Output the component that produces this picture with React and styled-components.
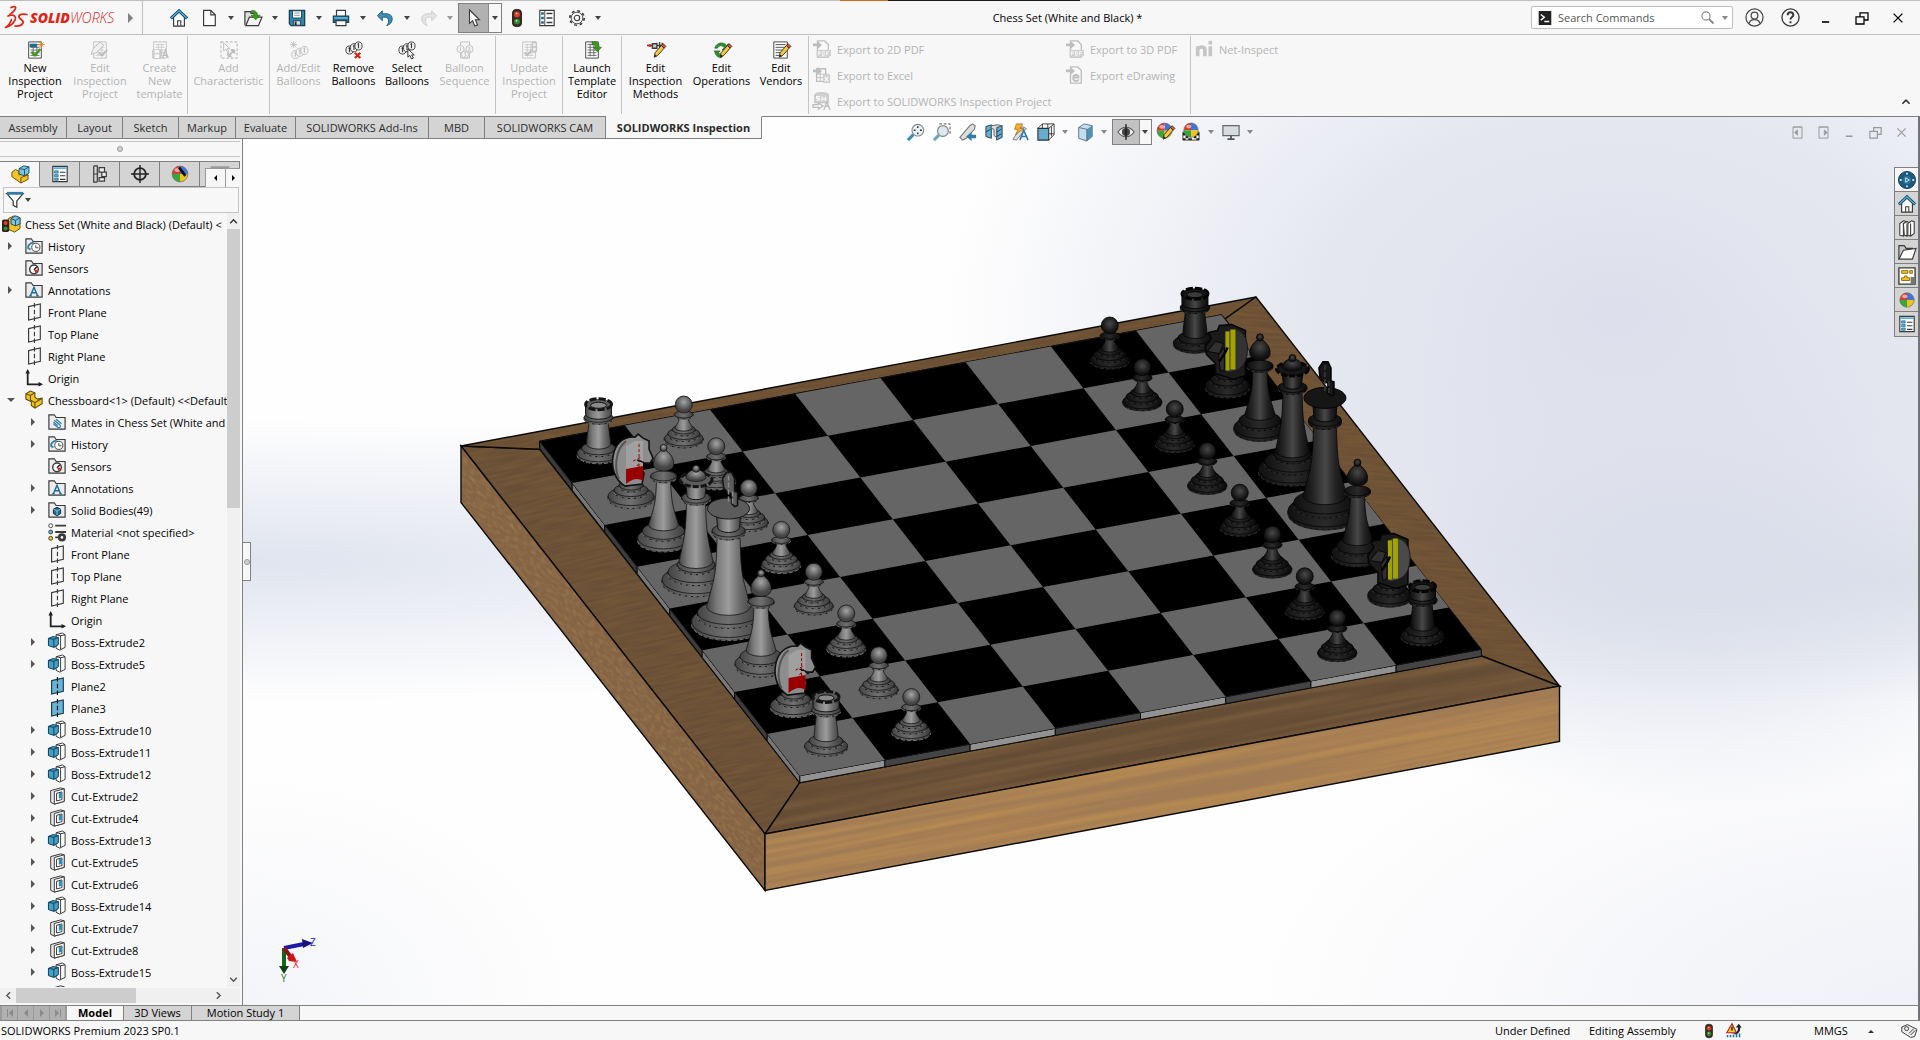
import styled, { createGlobalStyle } from 'styled-components';

const GlobalStyle = createGlobalStyle`
    * {
        box-sizing: border-box;
    }

    body {
        margin: 0;
        background: #f7f7f7;
        color: #000;
        font-family: "Open Sans", "Noto Sans", sans-serif;
        font-size: 11px;
        line-height: 13px;
    }

    button, input {
        font: inherit;
        color: inherit;
        padding: 0;
        border: 0;
        background: none;
    }
`;

const Window = styled.div`
    display: flex;
    flex-direction: column;
    height: 100vh;
    overflow: hidden;
`;

const TitleBar = styled.header`
    display: flex;
    align-items: center;
    flex: none;
    height: 35px;
    padding: 1px 4px 0 0;
    border-bottom: 1px solid #bdbdbd;
    background: linear-gradient(
        90deg,
        #bdbdbd 43.75%,
        #d2691e 43.75% 46.25%,
        #1a1a1a 46.25% 56.25%,
        #bdbdbd 56.25%
    ) top / 100% 1px no-repeat;
`;

const Brand = styled.div`
    display: flex;
    align-items: center;
    align-self: stretch;
    width: 143px;
    padding-left: 4px;
    border-right: 1px solid #bdbdbd;
    color: #da291c;
    font-size: 14px;
    font-style: italic;

    strong {
        font-weight: 800;
    }
`;

const BrandName = styled.span`
    flex: 1;
    padding-left: 1px;
    font-weight: 300;
`;

const QuickBar = styled.div`
    display: flex;
    align-items: center;
    padding-left: 24px;
`;

const QuickItem = styled.div`
    display: flex;
    align-items: center;
`;

const IconButton = styled.button`
    display: flex;
    align-items: center;
    justify-content: center;
    flex: none;
    width: ${({ $w }) => $w || 24}px;
    height: ${({ $h }) => $h || 24}px;
    margin-right: ${({ $gap }) => $gap || 0}px;
    opacity: ${({ disabled }) => (disabled ? 0.6 : 1)};
`;

const SplitBox = styled.div`
    display: flex;
    border: 1px solid #808080;
    background: #f7f7f7;
    margin-left: ${({ $gap }) => $gap || 0}px;

    ${IconButton}:first-child {
        background: ${({ $fill }) => $fill || '#b1b1b1'};
        border-right: 1px solid #8a8a8a;
    }
`;

const DocTitle = styled.h1`
    flex: 1;
    margin: 0;
    text-align: center;
    font-size: 11px;
    font-weight: 400;
`;

const SearchBox = styled.label`
    display: flex;
    align-items: center;
    width: 202px;
    height: 23px;
    margin-right: 3px;
    padding: 0 3px 0 6px;
    gap: 6px;
    background: #fff;
    border: 1px solid #bdbdbd;
    border-radius: 2px;

    input {
        flex: 1;
        min-width: 0;
        outline: none;
        color: #555;
    }

    input::placeholder {
        color: #555;
        opacity: 1;
    }
`;

const Ribbon = styled.section`
    display: flex;
    flex: none;
    height: 81px;
    padding: 1px 0 2px 2px;
`;

const RibbonGroup = styled.div`
    display: flex;
    align-items: flex-start;
    padding-top: 5px;
    border-right: 1px solid #c4c4c4;
`;

const RibbonButton = styled.button`
    display: flex;
    flex-direction: column;
    align-items: center;
    width: ${({ $w }) => $w}px;
    color: ${({ disabled }) => (disabled ? '#b4b4b4' : '#000')};
    white-space: pre-line;

    svg {
        margin-bottom: 2px;
        filter: ${({ disabled }) => (disabled ? 'grayscale(1)' : 'none')};
        opacity: ${({ disabled }) => (disabled ? 0.3 : 1)};
    }
`;

const ExportGrid = styled.div`
    display: grid;
    grid-template-columns: 253px 128px;
    grid-auto-rows: 26px;
    align-content: start;
    border-right: 1px solid ${({ $last }) => ($last ? 'transparent' : '#c4c4c4')};
`;

const ExportButton = styled.button`
    display: flex;
    align-items: center;
    gap: 6px;
    padding-left: 4px;
    color: #b4b4b4;
    white-space: nowrap;

    svg {
        flex: none;
        opacity: 0.3;
        filter: grayscale(1);
    }
`;

const CollapseRibbon = styled(IconButton)`
    margin-left: auto;
    align-self: flex-end;
    margin-right: 2px;
`;

// the command tabs hang over the top edge of both the panel and the viewport
const TabBar = styled.nav`
    position: absolute;
    z-index: 2;
    display: flex;
    height: 23px;
    border-bottom: 1px solid #7f7f7f;
`;

const CommandTab = styled.button`
    width: ${({ $w }) => $w}px;
    border-right: 1px solid #7f7f7f;
    border-top: 1px solid ${({ $active }) => ($active ? '#f7f7f7' : '#7f7f7f')};
    background: ${({ $active }) => ($active ? '#f7f7f7' : '#d4d4d4')};
    color: #2b2b2b;
    font-weight: ${({ $active }) => ($active ? 700 : 400)};
    white-space: nowrap;
`;

const Body = styled.div`
    display: flex;
    flex: 1;
    min-height: 0;
    border-right: 2px solid #707478;
`;

const SidePanel = styled.aside`
    display: flex;
    flex-direction: column;
    width: 243px;
    flex: none;
    padding: 25px 2px 2px 0;
    border-right: 1px solid #808080;
`;

const Grip = styled.div`
    display: flex;
    align-items: center;
    justify-content: center;
    flex: none;
    height: 16px;
    margin-bottom: 4px;
    border-top: 1px solid #c4c4c4;
    border-bottom: 1px solid #c4c4c4;
`;

const GripDot = styled.span`
    width: 6px;
    height: 6px;
    border-radius: 50%;
    border: 1px solid #9a9a9a;
    background: #d0d0d0;
`;

const PanelTabs = styled.div`
    display: flex;
    flex: none;
    height: 26px;
    border-top: 1px solid #808080;
    background: #d4d4d4;
    overflow: hidden;
    position: relative;
`;

const PanelTab = styled.button`
    display: flex;
    align-items: center;
    justify-content: center;
    flex: none;
    width: 40px;
    background: ${({ $active }) => ($active ? '#f7f7f7' : '#d4d4d4')};
    border-right: 1px solid #808080;
    border-bottom: 1px solid ${({ $active }) => ($active ? '#f7f7f7' : '#808080')};
`;

const TabScroller = styled.div`
    position: absolute;
    right: 0;
    bottom: 0;
    display: flex;
    background: #f7f7f7;
    border-top: 1px solid #9a9a9a;
    border-left: 1px solid #9a9a9a;

    button + button {
        border-left: 1px solid #9a9a9a;
    }
`;

const FilterBox = styled.div`
    display: flex;
    align-items: center;
    flex: none;
    height: 26px;
    margin: 0 1px 0 3px;
    padding-left: 2px;
    border: 1px solid #c4c4c4;

    input {
        flex: 1;
        min-width: 0;
        outline: none;
    }
`;

const TreeArea = styled.div`
    display: flex;
    flex: 1;
    min-height: 0;
`;

const Tree = styled.ul`
    flex: 1;
    min-width: 0;
    margin: 0;
    padding: 0;
    list-style: none;
    overflow: hidden;
`;

const TreeRow = styled.li`
    display: flex;
    align-items: center;
    height: 22px;
    gap: 5px;
    padding-left: ${({ $depth }) => ($depth < 0 ? 2 : $depth * 23 + 7)}px;
    white-space: nowrap;

    svg {
        flex: none;
    }
`;

const Twisty = styled.span`
    display: flex;
    justify-content: center;
    width: 8px;
    margin-right: 5px;
    flex: none;
`;

const VScroll = styled.div`
    display: flex;
    flex-direction: column;
    align-items: center;
    width: 13px;
    background: #f0f0f0;
`;

const VThumb = styled.div`
    width: 13px;
    height: 36%;
    background: #cdcdcd;
    margin-bottom: auto;
`;

const HScroll = styled.div`
    display: flex;
    align-items: center;
    flex: none;
    height: 15px;
    margin-top: 1px;
    padding-right: 14px;
    background: #f0f0f0;
`;

const HThumb = styled.div`
    width: 120px;
    height: 15px;
    background: #cdcdcd;
    margin-right: auto;
`;

const Viewport = styled.main`
    position: relative;
    flex: 1;
    min-width: 0;
    border-top: 1px solid #7f7f7f;
    background:
        radial-gradient(ellipse 40% 50% at 82% 22%, rgba(221, 224, 236, 1), rgba(221, 224, 236, 0.75) 45%, rgba(221, 224, 236, 0) 100%),
        radial-gradient(ellipse 26% 30% at 86% 48%, rgba(212, 217, 230, 0.9), rgba(212, 217, 230, 0) 100%),
        radial-gradient(ellipse 60% 16% at 0% 50%, rgba(224, 228, 239, 1), rgba(224, 228, 239, 0) 100%),
        radial-gradient(ellipse 50% 14% at 100% 52%, rgba(222, 226, 237, 0.9), rgba(222, 226, 237, 0) 100%),
        radial-gradient(ellipse 40% 36% at 100% 100%, rgba(240, 241, 247, 1), rgba(240, 241, 247, 0) 100%),
        radial-gradient(ellipse 20% 26% at 0% 100%, rgba(244, 245, 249, 1), rgba(244, 245, 249, 0) 100%),
        #fefefe;
`;

const Scene = styled.svg`
    display: block;
    width: 100%;
    height: 100%;
`;

const HeadsUp = styled.div`
    position: absolute;
    top: 2px;
    left: 0;
    right: 0;
    display: flex;
    align-items: center;
    justify-content: center;
    padding-right: 3px;
`;

const DocControls = styled.div`
    position: absolute;
    top: 3px;
    right: 4px;
    display: flex;
`;

const DocButton = styled(IconButton)`
    color: #999;
`;

const TaskPane = styled.div`
    position: absolute;
    top: 50px;
    right: 0;
    display: flex;
    flex-direction: column;
    border: 1px solid #808080;
    border-right: 0;
`;

const TaskTab = styled(IconButton)`
    background: ${({ $active }) => ($active ? '#f7f7f7' : '#d4d4d4')};
    border-bottom: 1px solid #808080;

    &:last-child {
        border-bottom: 0;
    }
`;

const PanelHandle = styled.button`
    position: absolute;
    left: 0;
    top: 425px;
    width: 8px;
    height: 39px;
    display: flex;
    align-items: center;
    justify-content: center;
    background: #f7f7f7;
    border: 1px solid #808080;
    border-left: 0;
`;

const BottomBar = styled.div`
    display: flex;
    flex: none;
    height: 16px;
    border-top: 1px solid #808080;
    border-bottom: 1px solid #808080;
    border-right: 2px solid #707478;
    background: #f7f7f7;
`;

const NavButtons = styled.div`
    display: flex;
    width: 67px;
    padding-left: 2px;
    background: #9a9a9a;

    button {
        width: 15px;
        height: 14px;
        margin-right: 1px;
        background: #b0b0b0;
        display: flex;
        align-items: center;
        justify-content: center;
    }
`;

const SheetTab = styled.button`
    width: ${({ $w }) => $w}px;
    line-height: 12px;
    background: ${({ $active }) => ($active ? '#f7f7f7' : '#d4d4d4')};
    border-right: 1px solid #808080;
    font-weight: ${({ $active }) => ($active ? 700 : 400)};
`;

const StatusBar = styled.footer`
    display: flex;
    align-items: center;
    flex: none;
    height: 19px;
    padding: 0 2px 0 1px;
`;

const StatusText = styled.span`
    width: ${({ $w }) => ($w ? `${$w}px` : 'auto')};
    flex: ${({ $grow }) => ($grow ? 1 : 'none')};
`;

const INK = '#3a3a3a';
const BLUE = '#1f6d94';
const SKY = '#5fb2d6';

const pencil = (
    <g>
        <path d="M8 18l1-5 7-8 3 3-7 8z" fill="#f2c84b" stroke="#3a2a10" />
        <path d="M16 5l2-2 3 3-2 2z" fill="#d9534f" stroke="#3a2a10" />
        <path d="M8 18l1-3 2 2z" fill="#222" />
    </g>
);

const balloons = (
    <g fill="#eee" stroke={INK}>
        <ellipse cx="5" cy="10" rx="4" ry="4.5" />
        <ellipse cx="10" cy="7.5" rx="4" ry="4.5" />
        <ellipse cx="15" cy="5.5" rx="4" ry="4.5" />
        <path d="M4 8.5l1-1v5M9 6l1-1v5M14 4l1-1v5" fill="none" strokeWidth="1.2" />
    </g>
);

const sheet = (
    <g>
        <path d="M3 1h14v18H3z" fill="#fff" stroke={INK} />
        <path d="M5 4h10M5 7h10M5 10h10M5 13h10M5 16h10M8 3v14M12 3v14" stroke="#666" strokeWidth="1" />
    </g>
);

const folder = (
    <path d="M1 18V2h6l2 3h10v13z" fill="#ececec" stroke={INK} strokeWidth="1.3" />
);

const colorBall = (
    <g>
        <path d="M10 10V2a8 8 0 0 1 8 8z" fill="#3f74d8" />
        <path d="M10 10V2a8 8 0 0 0-8 8z" fill="#dd3a2d" />
        <path d="M10 10H2a8 8 0 0 0 8 8z" fill="#35a83a" />
        <path d="M10 10h8a8 8 0 0 1-8 8z" fill="#f2c21a" />
        <circle cx="10" cy="10" r="8" fill="none" stroke="#666" strokeWidth=".7" />
        <ellipse cx="7.5" cy="6" rx="3" ry="2" fill="#fff" opacity=".55" />
    </g>
);

const list = (
    <g>
        <path d="M2 1.5h16v17H2z" fill="#fff" stroke={INK} strokeWidth="1.3" />
        <path d="M2.5 2.5h15v2h-15z" fill={SKY} />
        <path d="M4 6.5h4V9H4zM4 10.5h4V13H4zM4 14.5h4V17H4z" fill={SKY} stroke={BLUE} strokeWidth=".8" />
        <path d="M10 8h6M10 12h6M10 16h6" stroke={INK} strokeWidth="1.2" />
    </g>
);

const glyphs = {
    home: (
        <g>
            <path d="M4 9v10h12V9l-6-6z" fill="#fff" stroke={INK} strokeWidth="1.3" />
            <path d="M8.5 19v-6H12v6" fill="none" stroke={INK} strokeWidth="1.2" />
            <path d="M1 10.5L10 2l9 8.5" fill="none" stroke="#144f70" strokeWidth="3.4" />
            <path d="M1.5 10L10 2l8.5 8" fill="none" stroke={SKY} strokeWidth="1.3" />
        </g>
    ),
    page: <path d="M4 1.5h8l5 5v12H4zM12 1.5v5h5" fill="#fbfbfb" stroke={INK} strokeWidth="1.3" />,
    open: (
        <g>
            <path d="M1 18V3h6l1 2h5v4" fill="#ddd" stroke={INK} strokeWidth="1.3" />
            <path d="M2 18.5L6 9h14l-4 9.5z" fill="#f4f4f4" stroke={INK} strokeWidth="1.3" />
            <path d="M8 2c4-1 7 1 7 5h3l-5 5-5-5h3c0-2-1-3-3-3z" fill="#3d9a1c" stroke="#23660c" strokeWidth=".7" />
        </g>
    ),
    save: (
        <g>
            <path d="M1.5 1.5h17v17h-15l-2-2z" fill="#3185ad" stroke="#163f55" strokeWidth="1.4" />
            <path d="M5 2h10v8H5z" fill="#fff" stroke="#163f55" />
            <path d="M7 4.5h6M7 7h6" stroke="#888" />
            <path d="M6 13h8v5H6z" fill="#ddd" stroke="#163f55" />
            <path d="M7.5 14h2v4h-2z" fill="#222" />
        </g>
    ),
    print: (
        <g>
            <path d="M5 8V1.5h10V8" fill="#fff" stroke={INK} strokeWidth="1.3" />
            <path d="M1.5 8h17v7h-17z" fill={BLUE} stroke="#163f55" strokeWidth="1.3" />
            <path d="M2.5 9h15v2h-15z" fill={SKY} />
            <path d="M4.5 13h11v5.5h-11z" fill="#fff" stroke={INK} strokeWidth="1.3" />
        </g>
    ),
    undo: <path d="M7 2L1.5 7.5 7 13V9.5c4-1 7 0 7 4 0 2-1 3.5-2 5 4-1.500 6-4 6-7.500C18 6 13 4.500 7 5.500z" fill="#3d8fb8" stroke="#1b5878" />,
    redo: <path d="M13 2l5.500 5.500L13 13V9.500c-4-1-7 0-7 4 0 2 1 3.500 2 5-4-1.500-6-4-6-7.500C2 6 7 4.500 13 5.500z" fill="#d8d8d8" stroke="#b0b0b0" />,
    cursor: <path d="M5 1v15l3.500-3 2.500 6 3-1.200-2.500-5.800H16z" fill="#fff" stroke={INK} strokeWidth="1.2" />,
    light: (
        <g>
            <rect x="5" y="0.5" width="10" height="19" rx="4" fill="#3b2d25" stroke="#221a15" />
            <circle cx="10" cy="6" r="3.2" fill="#e23b24" />
            <circle cx="10" cy="14" r="3.2" fill="#2f8f2f" />
            <circle cx="9.5" cy="5" r="1.1" fill="#ffb3a0" />
            <circle cx="9.5" cy="13" r="1.1" fill="#aee0a0" />
        </g>
    ),
    options: (
        <g>
            <path d="M2 1.5h16v17H2z" fill="#fff" stroke={INK} strokeWidth="1.3" />
            <path d="M7.5 2v16" stroke={INK} />
            <path d="M3.5 3.5h3v3h-3zM3.5 8.5h3v3h-3zM3.5 13.5h3v3h-3z" fill={BLUE} />
            <path d="M9.500 5h6.500M9.500 10h6.500M9.500 15h6.500" stroke={INK} strokeWidth="1.4" />
        </g>
    ),
    gear: (
        <g fill="none" stroke={INK}>
            <circle cx="10" cy="10" r="3" strokeWidth="1.2" />
            <circle cx="10" cy="10" r="6.5" strokeWidth="1" />
            <circle cx="10" cy="10" r="8" strokeWidth="1.8" strokeDasharray="3.14 3.14" />
        </g>
    ),
    newInspection: (
        <g>
            {sheet}
            <path d="M4 3h8v4H4z" fill={BLUE} />
            <path d="M6 12l4 4 6-7" fill="none" stroke="#3d9a1c" strokeWidth="2.6" />
            <path d="M17 0v8M13 4h8M14.5 1.5l5 5M19.5 1.5l-5 5" stroke="#e0892b" />
        </g>
    ),
    editInspection: <g>{sheet}<path d="M9 13l3 3 6-6" fill="none" stroke={INK} strokeWidth="2" /><path d="M0 15l2-6 8-8 4 4-8 8z" fill="#ddd" stroke={INK} /></g>,
    template: <g>{sheet}<path d="M2 10h9v9H2z" fill="#888" stroke={INK} /><path d="M4 10h5v3H4zM4 15h5v4H4z" fill="#fff" /><path d="M13 19l3-9 3 9M14 16h4" fill="none" stroke={INK} strokeWidth="1.5" /></g>,
    addChar: (
        <g fill="none" stroke={INK}>
            <path d="M1 1h18v18H1z" strokeDasharray="3 2" strokeWidth="1.3" />
            <path d="M4 2v9l2.5-2 2 4 1.500-1-2-3.500h3z" fill="#fff" />
            <path d="M9 17l7-7M16 10h-4M16 10v4M9 17h4M9 17v-4" strokeWidth="2" />
        </g>
    ),
    addBalloon: <g><g transform="translate(1 5)">{balloons}</g><path d="M4 0v8M0 4h8M1 1l6 6M7 1l-6 6" stroke={INK} /></g>,
    removeBalloon: <g>{balloons}<path d="M11 13l6 6M17 13l-6 6" stroke="#d9230f" strokeWidth="2.4" /></g>,
    selectBalloon: <g>{balloons}<path d="M11 9v9l2.200-2 1.800 4 2-1-1.800-3.500H18z" fill="#fff" stroke="#222" /></g>,
    sequence: (
        <g fill="#eee" stroke={INK}>
            <path d="M5 1h10v18H5z" />
            <circle cx="5" cy="9" r="4" />
            <circle cx="15" cy="9" r="4" />
            <circle cx="10" cy="15" r="4" />
            <path d="M5 7v4M13.5 8c2-2 3 0 0 3h3M9 13h2l-1 2c2 0 1 3-1 2" fill="none" />
        </g>
    ),
    update: <g>{sheet}<path d="M5 13l3 3 5-6" fill="none" stroke={INK} strokeWidth="2" /><rect x="13" y="0" width="6" height="13" rx="3" fill="#555" /><circle cx="16" cy="4" r="1.8" fill="#ddd" /><circle cx="16" cy="9" r="1.8" fill="#ddd" /></g>,
    launch: <g>{sheet}<path d="M10 1c5-1 8 1 8 6h2.500l-4.500 5-4.500-5H14c0-2-1-3-4-3z" fill="#3d9a1c" stroke="#23660c" strokeWidth=".7" /></g>,
    methods: <g><path d="M0 5h6M6 3h5v5H6zM11 2v7M14 1v8M17 2v6M11 5h7" stroke={INK} strokeWidth="1.5" fill="#ccc" /><path d="M0 5l4-2v4z" fill="#d9230f" />{pencil}</g>,
    operations: <g><path d="M2 8c1-6 10-8 13-3l2-2v7h-7l2.500-2.500C10 4 6 5 5 8zM2 12c1 5 4 7 8 6v-3c-2 0-3-1-4-2l2-2H1z" fill="#2f8f2f" stroke="#1d5f1d" strokeWidth=".7" />{pencil}</g>,
    vendors: <g><path d="M2 1h15v18H2z" fill="#fff" stroke={INK} /><path d="M4 4h11M4 7h11M4 10h8M4 13h6M4 16h6" stroke="#444" />{pencil}</g>,
    exportPage: <g><path d="M5 1h8l4 4v14H5z" fill="#fff" stroke={INK} strokeWidth="1.5" /><path d="M0 4h5V1l5 4.500L5 10V7H0z" fill={INK} /><path d="M4 11h16v7H4z" fill="#777" /><path d="M6 17v-4h2v2H6M10.500 13v4h2v-4zM15 17v-4h3M15 15h2" stroke="#fff" fill="none" /></g>,
    exportExcel: <g><path d="M4 3h10v14H4z" fill="#fff" stroke={INK} strokeWidth="1.5" /><path d="M4 9h12M4 13h8M8 7v10" stroke={INK} /><path d="M0 4h5V1l5 4.500L5 10V7H0z" fill={INK} /><path d="M11 9h8v10h-8z" fill="#777" /><path d="M13 12l4 5M17 12l-4 5" stroke="#fff" strokeWidth="1.5" /></g>,
    exportProject: <g><path d="M2 3c0-3 15-3 15 0v9H2z" fill="#777" stroke={INK} /><path d="M4 9h3V7H4V5h4M10 5v4l2-2 2 2V5" stroke="#fff" fill="none" strokeWidth="1.3" /><path d="M0 14h6v-2l5 3.500L6 19v-2H0zM12 20l3.500-9 3.500 9M13 16h5" fill="none" stroke={INK} strokeWidth="1.5" /></g>,
    exportDrawing: <g><path d="M5 1h8l4 4v14H5z" fill="#fff" stroke={INK} strokeWidth="1.5" /><path d="M0 4h5V1l5 4.500L5 10V7H0z" fill={INK} /><path d="M8 13h6c0-4-6-4-6 0 0 5 5 4 6 2" fill="none" stroke={INK} strokeWidth="2" /></g>,
    ni: <g fill="none" stroke="#555" strokeWidth="4"><path d="M3 18V7M3 10c2-3 8-3 8 1v7M17 7v11" /><path d="M17 1v4" /></g>,
    zoomFit: <g><circle cx="12" cy="8" r="6.5" fill="#e6f0f5" stroke="#888" strokeWidth="1.2" /><path d="M12 3.500v2M12 10.500v2M7.500 8h2M14.500 8h2" stroke="#333" strokeWidth="1.6" /><path d="M7 13l-6 6" stroke="#3d8fb8" strokeWidth="3.5" /></g>,
    zoomArea: <g><path d="M7 1h12v12" fill="none" stroke="#444" strokeDasharray="3 2" /><circle cx="11" cy="9" r="6" fill="#d9e9f1" stroke="#888" strokeWidth="1.4" /><path d="M6.5 13.5L1 19" stroke="#6aa7c4" strokeWidth="3.5" /></g>,
    prevView: <g><path d="M1 16L12 3l3-2 3 2-1 4-9 10-4 2z" fill="#ddd" stroke="#777" strokeWidth="1.2" /><path d="M19 13h-5v-3l-6 5 6 5v-3h5z" fill="#2f7ea6" /></g>,
    section: <g><path d="M1 4l6-2v15l-6-2zM13 5l6-2v13l-6 3z" fill="#5fb2d6" stroke="#234" /><path d="M7 3l7-1 5 1-6 2v11l-3-2V7L7 6z" fill="#ddd" stroke="#555" /><path d="M13 10l5-3M13 15l5-3M1 10l5-3" stroke="#234" /></g>,
    annotView: <g><path d="M2 18L12 4l5 2L6 19z" fill="#ddd" stroke="#777" /><path d="M6 1h7l-3 5h4l-9 7 3-6H4z" fill="#f4b52c" stroke="#b4611a" strokeWidth=".8" /><path d="M10 19l4-11 5 11M12 15h5" fill="none" stroke="#2f7ea6" strokeWidth="1.8" /></g>,
    orient: <g><path d="M1 6h12v13H1z" fill="#68acc9" stroke="#234" strokeWidth="1.2" /><path d="M1 6l5-5h13v12l-6 6M13 6l6-5M6 1v5M12 1v5M13 12h6M16 4v11" fill="none" stroke="#333" /></g>,
    display: <g><path d="M3 5l6-4 9 2v12l-6 5-9-3z" fill="#bfe0ee" stroke="#668" /><path d="M12 7l6-4v12l-6 5z" fill="#4f93b3" /><path d="M3 5l9 2v13" fill="none" stroke="#668" /></g>,
    eye: <g><path d="M1 10c5-7 13-7 18 0-5 7-13 7-18 0z" fill="#eee" stroke="#555" strokeWidth="1.2" /><circle cx="10" cy="10" r="4.5" fill="#444" /><path d="M10 1v18" stroke="#111" strokeWidth="1.3" /></g>,
    editBall: <g><g transform="translate(-1 -2) scale(1.05)">{colorBall}</g>{pencil}</g>,
    sceneBall: <g><path d="M1 10h18v9H1z" fill="#fff" stroke="#333" /><path d="M1 11h3v3H1zM4 14h3v3H4zM13 14h3v3h-3zM16 11h3v3h-3zM1 17h3v2H1zM7 17h4v2H7zM16 17h3v2h-3z" fill="#222" /><g transform="translate(0 -2)">{colorBall}</g></g>,
    monitor: <g><path d="M1 3h18v11H1z" fill="#d6dde2" stroke="#666" strokeWidth="1.3" /><path d="M10 14v4M6 18h8" stroke="#555" strokeWidth="2" /></g>,
    user: <g fill="none" stroke="#444" strokeWidth="1.3"><circle cx="10" cy="10" r="9" /><circle cx="10" cy="8" r="3.6" /><path d="M4.5 16c1-5 10-5 11 0" /></g>,
    help: <g fill="none" stroke="#333" strokeWidth="1.4"><circle cx="10" cy="10" r="9" /><path d="M7 7.500c0-4 6-4 6 0 0 2-3 2-3 4.500M10 14v2" strokeWidth="2" /></g>,
    minimize: <path d="M5 15h9" stroke="currentColor" strokeWidth="2" />,
    restore: <path d="M2.5 8.5h10v9h-10zM7.5 8V3.5h10v9H13" fill="none" stroke="currentColor" strokeWidth="1.6" />,
    close: <path d="M4.5 4.5l11 11M15.5 4.5l-11 11" stroke="currentColor" strokeWidth="1.6" />,
    dockLeft: <g><path d="M4 2.5h12v15H4z" fill="none" stroke="currentColor" strokeWidth="1.3" /><path d="M4 3h12M10 6.500v7L6 10z" fill="currentColor" stroke="currentColor" /></g>,
    dockRight: <g><path d="M4 2.5h12v15H4z" fill="none" stroke="currentColor" strokeWidth="1.3" /><path d="M4 3h12M11 6.500v7l4-3.500z" fill="currentColor" stroke="currentColor" /></g>,
    search: <g fill="none" stroke="#888" strokeWidth="1.5"><circle cx="8" cy="8" r="5.5" /><path d="M12 12l6 6" strokeWidth="2.4" /></g>,
    prompt: <g><path d="M1 0h18v20H1z" fill="#222" /><path d="M4 5l5 4-5 4M9 15h7" fill="none" stroke="#fff" strokeWidth="2" /></g>,
    up: <path d="M4 13l6-6 6 6" fill="none" stroke="#333" strokeWidth="2.6" />,
    down: <path d="M4 7l6 6 6-6" fill="none" stroke="#555" strokeWidth="2.6" />,
    left: <path d="M13 4l-6 6 6 6" fill="none" stroke="#555" strokeWidth="2.6" />,
    right: <path d="M7 4l6 6-6 6" fill="none" stroke="#555" strokeWidth="2.6" />,
    assembly: (
        <g stroke="#5c4a08">
            <path d="M1 8l4-3 4 2v4l7-2 3 2v5l-8 4L1 13z" fill="#f2c322" />
            <path d="M11 20v-6l8-3" fill="none" />
            <path d="M9 4l5-3 6 1v7l-5 3-6-2z" fill="#7cc3e0" stroke="#1b4a62" />
            <path d="M9 4l6 1 5-3M15 5v7" fill="none" stroke="#1b4a62" />
        </g>
    ),
    rootAssembly: (
        <g>
            <path d="M7 4l6-3 7 2v12l-6 4-7-3z" fill="#f2c322" stroke="#5c4a08" />
            <path d="M10 4l5-3 5 2v7l-5 2-5-2z" fill="#7cc3e0" stroke="#1b4a62" />
            <path d="M10 4l5 2 5-3M15 6v6" fill="none" stroke="#1b4a62" />
            <rect x="0" y="5" width="8" height="14" rx="2" fill="#2b2320" />
            <circle cx="4" cy="9" r="2.3" fill="#e23b24" />
            <circle cx="4" cy="15" r="2.3" fill="#2f8f2f" />
        </g>
    ),
    part: (
        <g stroke="#5c4a08" strokeWidth="1.2">
            <path d="M1 7V3l5-3 5 2v5l3 2 5-1v6l-8 5-4-3v-4L1 9z" fill="#f2c322" />
            <path d="M1 3l5 2 5-3M6 5v5l5 3 8-5M11 13v6" fill="none" />
        </g>
    ),
    list,
    config: <g fill="#eee" stroke={INK} strokeWidth="1.3"><path d="M3 1v18h4M3 10h5M3 1h4v18" fill="none" /><path d="M9 3h6v5H9zM12 8h5v5h-5zM9 14h6v4H9z" /></g>,
    target: <g fill="none" stroke="#222" strokeWidth="2"><circle cx="10" cy="10" r="6.5" /><path d="M10 0v20M0 10h20" strokeWidth="1.6" /></g>,
    ball: colorBall,
    ballMark: <g><g transform="translate(-1 -1) scale(1.1)">{colorBall}</g><path d="M9 3l7 9" stroke="#111" strokeWidth="3" /></g>,
    camera: <path d="M1 3h18v5H1z" fill={BLUE} stroke="#999" strokeWidth="3" />,
    filter: <g><path d="M1 3h18l-7 8v7l-4-2v-5z" fill="#fff" stroke={INK} strokeWidth="1.4" /><path d="M1 1h18v3H1z" fill="#2f7ea6" /></g>,
    history: <g>{folder}<circle cx="12" cy="11.5" r="4.5" fill="#fff" stroke={INK} /><path d="M12 9v3h3" fill="none" stroke={INK} /><path d="M3 12c1-5 5-6 7-5M3 12l3 2" fill="none" stroke="#2f7ea6" strokeWidth="2" /></g>,
    sensors: <g>{folder}<circle cx="10" cy="11.5" r="4.8" fill="#fff" stroke={INK} strokeWidth="1.6" /><path d="M10 12l3-3" stroke="#111" strokeWidth="1.5" /><path d="M10 12h4l-2 4z" fill="#d9230f" /></g>,
    annotations: <g>{folder}<path d="M6 16.500l4-9.500 4 9.500M7.500 13h5M4.500 16.500h3M12.500 16.500h3" fill="none" stroke={BLUE} strokeWidth="1.6" /></g>,
    mates: <g>{folder}<path d="M7 8l6 5c2 2 0 4-2 3L6 12M9 7l6 5M6 10l5 4" fill="none" stroke="#2f7ea6" strokeWidth="1.3" /></g>,
    bodies: <g>{folder}<path d="M6 9l4-2 4 2v5l-4 2.500L6 14z" fill={BLUE} stroke="#123" /><path d="M6 9l4 2 4-2M10 11v5" fill="none" stroke="#bde" strokeWidth=".8" /></g>,
    material: <g stroke={INK}><circle cx="3" cy="3" r="2.2" fill="#fff" /><circle cx="3" cy="10" r="2.2" fill={SKY} /><circle cx="3" cy="17" r="2.2" fill="#f2c322" /><path d="M8 3h12M8 10h12M8 16h4" strokeWidth="2" /><circle cx="15.5" cy="16" r="3" fill="none" strokeWidth="3" /></g>,
    plane: <g fill="none" stroke={INK} strokeWidth="1.3"><path d="M4 4l13-3v15L4 19z" /><path d="M10.5 0v5M10.5 7.5v5M10.5 15v5" /></g>,
    planeBlue: <g fill="#68b4d4" stroke="#143f55" strokeWidth="1.3"><path d="M4 4l13-3v15L4 19z" /><path d="M10.5 0v5M10.5 7.5v5M10.5 15v5" stroke="#111" /></g>,
    origin: <g stroke="#222" strokeWidth="2"><path d="M3 2v15h15" fill="none" /><path d="M3 0L.5 5h5zM20 17l-5-2.500v5z" fill="#222" stroke="none" /></g>,
    boss: (
        <g strokeWidth="1.1">
            <path d="M9 2l7-2 3 2v14l-6 3-4-2z" fill="#fff" stroke={INK} />
            <path d="M14 3v15M14 3l5-1M14 3L9 2" fill="none" stroke={INK} />
            <path d="M.5 6l5-2 6 1v8l-5 3-6-2z" fill="#45a0c8" stroke="#0f3f57" />
            <path d="M.5 6l6 1 5-2M6.5 7v9" fill="none" stroke="#0f3f57" />
        </g>
    ),
    cut: (
        <g strokeWidth="1.1">
            <path d="M3 4l11-3 4 1v14L7 19l-4-2z" fill="#e9e9e9" stroke={INK} />
            <path d="M7 5l11-3v14L7 19z" fill="#fff" stroke={INK} />
            <path d="M9.5 7l6-1.500V14l-6 1.500z" fill="#fff" stroke={INK} />
            <path d="M12 7v6l3.500-1V6z" fill="#2f8fba" />
        </g>
    ),
    compass: <g><circle cx="10" cy="10" r="9.5" fill="#1a5b80" stroke="#0c3650" /><circle cx="10" cy="10" r="4.5" fill="#2f7397" /><path d="M8.5 7.500l4 2.500-4 2.500z" fill="none" stroke="#cfe6f2" /><path d="M10 2v2M10 16v2M2 10h2M16 10h2" stroke="#cfe6f2" strokeWidth="2" /></g>,
    library: <g fill="#fff" stroke={INK} strokeWidth="1.2"><path d="M2 5l4-3 4 1v13l-4 3-4-1zM6 5v14M6 5l4-2" /><path d="M6 5l4-2 4 1v13l-4 2-3-1zM10 5v14" /><path d="M11 5l4-3 3 1v13l-4 3-3-1zM14 5v14" /></g>,
    folderOpen: <g stroke={INK} strokeWidth="1.3"><path d="M1 18V3h6l2 3h7v3" fill="#c9c9c9" /><path d="M1 18L6 8l14-2-4 12z" fill="#fff" /></g>,
    palette: <g><path d="M1 1h18v18H1z" fill="#fff" stroke={INK} strokeWidth="1.5" /><path d="M4 4h7v3H4zM13 4h3v3h-3zM4 15v-3h3v-2h3v2h3v3z" fill="#f2c322" stroke="#8c6c08" /><path d="M14 11h5v8h-5z" fill="#777" /></g>,
    rebuild: <g><path d="M1 13L8 1l6 12z" fill="#f7c52c" stroke="#b22" strokeWidth="1.5" /><path d="M8 5v5" stroke="#111" strokeWidth="1.8" /><path d="M7 14c6 1 9-2 9-8h-3l4-5 4 5h-2c0 8-5 11-12 8z" fill="#222" /><path d="M1 16h2v3H1zM5 16h2v3H5zM9 16h2v3H9zM13 14h2v5h-2zM17 14h2v5h-2z" fill="#1f6d94" /></g>,
    tag: <g stroke={INK} fill="#eee" strokeWidth="1.2"><path d="M1 5l7-3 12 6-3 9-5 1L1 11z" /><circle cx="7" cy="7" r="2.5" /><path d="M10 13l6-6M12 15l6-6" /></g>,
};

const Icon = ({ name, size = 20 }) => (
    <svg width={size} height={size} viewBox="0 0 20 20" aria-hidden="true" overflow="visible">
        {glyphs[name]}
    </svg>
);

const Caret = ({ w = 20, h = 24, color = '#444', label = 'More' }) => (
    <IconButton $w={w} $h={h} aria-label={label}>
        <svg width="6" height="4" viewBox="0 0 6 4"><path d="M0 0h6L3 4z" fill={color} /></svg>
    </IconButton>
);

const Triangle = ({ d, color = '#555' }) => (
    <svg width="8" height="8" viewBox="0 0 8 8" aria-hidden="true"><path d={d} fill={color} /></svg>
);

const DSLogo = () => (
    <svg width="25" height="26" viewBox="0 0 25 26" fill="none" stroke="#da291c" strokeWidth="1.7" strokeLinecap="round" strokeLinejoin="round">
        <path d="M7 2.500c3-1.500 6-1 4 2-1 2-3 3.500-5 5" />
        <path d="M4 11c6-2.500 9 .5 6.500 5-2 3.500-5 5.500-9 6.500 2.500-1.500 5-4.500 6-8" />
        <path d="M23 9.500c-4-1-8.500 0-8 2.500.4 2.500 5.500 3 4 6-1.200 2.300-4.500 3.200-8 3" />
    </svg>
);

const LogoArrow = () => (
    <svg width="20" height="10" viewBox="0 0 20 10" aria-hidden="true"><path d="M6 0l5 5-5 5z" fill="#808080" /></svg>
);

const ribbonGroups = [
    [
        { icon: 'newInspection', label: 'New\nInspection\nProject', w: 66 },
        { icon: 'editInspection', label: 'Edit\nInspection\nProject', w: 64, off: true },
        { icon: 'template', label: 'Create\nNew\ntemplate', w: 55, off: true },
    ],
    [{ icon: 'addChar', label: 'Add\nCharacteristic', w: 81, off: true }],
    [
        { icon: 'addBalloon', label: 'Add/Edit\nBalloons', w: 57, off: true },
        { icon: 'removeBalloon', label: 'Remove\nBalloons', w: 53 },
        { icon: 'selectBalloon', label: 'Select\nBalloons', w: 54 },
        { icon: 'sequence', label: 'Balloon\nSequence', w: 61, off: true },
    ],
    [{ icon: 'update', label: 'Update\nInspection\nProject', w: 66, off: true }],
    [{ icon: 'launch', label: 'Launch\nTemplate\nEditor', w: 58 }],
    [
        { icon: 'methods', label: 'Edit\nInspection\nMethods', w: 67 },
        { icon: 'operations', label: 'Edit\nOperations', w: 65 },
        { icon: 'vendors', label: 'Edit\nVendors', w: 54 },
    ],
];

const exportItems = [
    ['exportPage', 'Export to 2D PDF'],
    ['exportPage', 'Export to 3D PDF'],
    ['exportExcel', 'Export to Excel'],
    ['exportDrawing', 'Export eDrawing'],
    ['exportProject', 'Export to SOLIDWORKS Inspection Project'],
];

const commandTabs = [
    ['Assembly', 67],
    ['Layout', 56],
    ['Sketch', 56],
    ['Markup', 57],
    ['Evaluate', 60],
    ['SOLIDWORKS Add-Ins', 133],
    ['MBD', 56],
    ['SOLIDWORKS CAM', 121],
    ['SOLIDWORKS Inspection', 156],
];

// depth, icon, label, arrow: c = collapsed, o = open
const treeItems = [
    [-1, 'rootAssembly', 'Chess Set (White and Black) (Default) <'],
    [0, 'history', 'History', 'c'],
    [0, 'sensors', 'Sensors'],
    [0, 'annotations', 'Annotations', 'c'],
    [0, 'plane', 'Front Plane'],
    [0, 'plane', 'Top Plane'],
    [0, 'plane', 'Right Plane'],
    [0, 'origin', 'Origin'],
    [0, 'part', 'Chessboard<1> (Default) <<Default', 'o'],
    [1, 'mates', 'Mates in Chess Set (White and', 'c'],
    [1, 'history', 'History', 'c'],
    [1, 'sensors', 'Sensors'],
    [1, 'annotations', 'Annotations', 'c'],
    [1, 'bodies', 'Solid Bodies(49)', 'c'],
    [1, 'material', 'Material <not specified>'],
    [1, 'plane', 'Front Plane'],
    [1, 'plane', 'Top Plane'],
    [1, 'plane', 'Right Plane'],
    [1, 'origin', 'Origin'],
    [1, 'boss', 'Boss-Extrude2', 'c'],
    [1, 'boss', 'Boss-Extrude5', 'c'],
    [1, 'planeBlue', 'Plane2'],
    [1, 'planeBlue', 'Plane3'],
    [1, 'boss', 'Boss-Extrude10', 'c'],
    [1, 'boss', 'Boss-Extrude11', 'c'],
    [1, 'boss', 'Boss-Extrude12', 'c'],
    [1, 'cut', 'Cut-Extrude2', 'c'],
    [1, 'cut', 'Cut-Extrude4', 'c'],
    [1, 'boss', 'Boss-Extrude13', 'c'],
    [1, 'cut', 'Cut-Extrude5', 'c'],
    [1, 'cut', 'Cut-Extrude6', 'c'],
    [1, 'boss', 'Boss-Extrude14', 'c'],
    [1, 'cut', 'Cut-Extrude7', 'c'],
    [1, 'cut', 'Cut-Extrude8', 'c'],
    [1, 'boss', 'Boss-Extrude15', 'c'],
    [1, 'cut', ''],
];

// board geometry: corner, step along a row, step along a column
const ORIGIN = [539.7, 441.3];
const COL = [85.2, -15.8];
const ROW = [32.5, 41.8];

const at = (c, r) => [
    ORIGIN[0] + COL[0] * c + ROW[0] * r,
    ORIGIN[1] + COL[1] * c + ROW[1] * r,
];

const points = (list) => list.map((p) => p.join(',')).join(' ');
const drop = ([x, y], h = 7) => [x, y + h];

const tones = {
    w: { body: 'url(#bodyW)', base: 'url(#baseW)', head: 'url(#headW)', disc: '#5c5c5c', edge: '#141414', rim: '#8a8a8a' },
    b: { body: 'url(#bodyB)', base: 'url(#baseB)', head: 'url(#headB)', disc: '#161616', edge: '#050505', rim: '#3a3a3a' },
};

const Ring = ({ y, rx, ry, h = 2, t }) => (
    <g>
        <path d={`M${-rx} ${y}v${h}a${rx} ${ry} 0 0 0 ${2 * rx} 0v${-h}z`} fill={t.base} stroke={t.edge} />
        <path d={`M${-rx} ${y + h}a${rx} ${ry} 0 0 0 ${2 * rx} 0`} fill="none" stroke={t.rim} strokeWidth=".8" strokeDasharray="4 2" />
        <ellipse cy={y} rx={rx} ry={ry} fill={t.base} stroke={t.edge} strokeWidth=".8" />
    </g>
);

const Column = ({ from, to, w0, w1, t }) => {
    const mid = from + (to - from) * 0.45;
    return (
        <path
            d={`M${-w0} ${from}C${-w1 - 2} ${mid} ${-w1 - 1} ${mid} ${-w1} ${to}H${w1}C${w1 + 1} ${mid} ${w1 + 2} ${mid} ${w0} ${from}a${w0} ${w0 * 0.4} 0 0 1 ${-2 * w0} 0z`}
            fill={t.body}
            stroke={t.edge}
            strokeWidth=".8"
        />
    );
};

const Pawn = ({ t }) => (
    <g>
        <Ring y={0} rx={19.5} ry={7.5} t={t} />
        <Ring y={-5} rx={16} ry={6} t={t} />
        <Ring y={-9} rx={11.5} ry={4.5} t={t} />
        <Column from={-11} to={-22} w0={9} w1={4} t={t} />
        <Ring y={-24} rx={9.5} ry={3.5} h={1} t={t} />
        <circle cy="-34" r="8.5" fill={t.head} stroke={t.edge} strokeWidth=".8" />
    </g>
);

const Rook = ({ t }) => (
    <g>
        <Ring y={-1} rx={21.5} ry={8.5} t={t} />
        <Ring y={-6} rx={17} ry={6.5} t={t} />
        <Column from={-10} to={-34} w0={12} w1={9.5} t={t} />
        <Ring y={-37} rx={14.5} ry={5} t={t} />
        <path d="M-13 -40v-10h26v10a13 5 0 0 1-26 0z" fill={t.body} stroke={t.edge} />
        <ellipse cy="-50" rx="13" ry="5.5" fill={t.disc} stroke={t.edge} strokeWidth="3" strokeDasharray="7 2" />
        <ellipse cy="-49" rx="8" ry="3" fill={t.rim} stroke={t.edge} />
    </g>
);

const Bishop = ({ t }) => (
    <g>
        <Ring y={0} rx={26} ry={11} h={3} t={t} />
        <Ring y={-7} rx={21} ry={8.5} t={t} />
        <Column from={-13} to={-58} w0={15} w1={7} t={t} />
        <Ring y={-62} rx={13} ry={5} t={t} />
        <path d="M0 -89c7 4 11 10 10 16-1 8-19 8-20 0-1-6 3-12 10-16z" fill={t.head} stroke={t.edge} strokeWidth=".8" />
        <circle cy="-90" r="3.5" fill={t.head} stroke={t.edge} strokeWidth=".8" />
    </g>
);

const Queen = ({ t }) => (
    <g>
        <Ring y={0} rx={34} ry={14} h={3} t={t} />
        <Ring y={-8} rx={28} ry={11} h={3} t={t} />
        <Ring y={-15} rx={19} ry={8} h={2} t={t} />
        <Column from={-18} to={-76} w0={17} w1={9.5} t={t} />
        <Ring y={-82} rx={14.5} ry={5.5} h={2} t={t} />
        <path d="M-9 -84l-1-10h20l-1 10a9 4 0 0 1-18 0z" fill={t.body} stroke={t.edge} />
        <ellipse cy="-100" rx="16" ry="7" fill={t.disc} stroke={t.edge} strokeWidth="3" strokeDasharray="6 2" />
        <path d="M-10 -102c1-11 19-11 20 0-2 5-18 5-20 0z" fill={t.head} stroke={t.edge} strokeWidth=".8" />
        <circle cy="-111" r="3.5" fill={t.head} stroke={t.edge} strokeWidth=".8" />
    </g>
);

const King = ({ t }) => (
    <g>
        <Ring y={0} rx={37} ry={16} h={3} t={t} />
        <Ring y={-9} rx={31} ry={12} h={4} t={t} />
        <Column from={-15} to={-84} w0={22} w1={11.5} t={t} />
        <Ring y={-91} rx={16.5} ry={6.5} h={3} t={t} />
        <path d="M-11 -94l-1-12h24l-1 12a11 5 0 0 1-22 0z" fill={t.body} stroke={t.edge} />
        <ellipse cy="-113" rx="21" ry="10.5" fill={t.disc} stroke={t.edge} />
        <path d="M-5 -134l-1-9 4-6h5l3 6v13l3 1v13l-3 1-3-3v-10l-4-1z" fill={t.disc} stroke={t.edge} strokeWidth="1.6" />
        <path d="M0 -146v28M4 -130v12" stroke={t.rim} strokeWidth="1.5" strokeDasharray="5 2" />
    </g>
);

const KnightWhite = ({ t }) => (
    <g>
        <Ring y={0} rx={23} ry={9.5} h={3} t={t} />
        <Ring y={-6} rx={17} ry={6.5} t={t} />
        <Ring y={-11} rx={12} ry={5} t={t} />
        <path d="M-6 -10C-16 -16-20 -28-18 -40S-8 -60 4 -59l3-3 5 4 6 3v8l4 9-3 5h-7l-4-4 1 8 4 6-2 11z" fill="#8d8d8d" stroke="#111" strokeWidth="1.6" />
        <path d="M-12 -17c-5-10-4-30 7-38" fill="none" stroke="#555" strokeWidth="2" />
        <path d="M-5 -50l9-5h8v26l-17 3z" fill="#a0a0a0" />
        <path d="M-5 -27l17-3v15c-5-4-12-2-17 3z" fill="#900" />
        <path d="M8 -52v26M2 -35l8-4M6 -30l4-6" stroke="#900" strokeDasharray="3 2" />
        <path d="M6 -36l6 2 3 3" fill="none" stroke="#111" strokeWidth="1.5" />
    </g>
);

const KnightBlack = ({ t, face }) => (
    <g>
        <Ring y={0} rx={22} ry={9.5} h={3} t={t} />
        <Ring y={-6} rx={17} ry={6.5} t={t} />
        <Ring y={-11} rx={12} ry={5} t={t} />
        <path d="M-12 -12v-10l-9-9-1-8 6-8-3-6 9-2 2-5 12-1 14 6v45l-12 4z" fill="#1b1b1b" stroke="#050505" strokeWidth="1.5" />
        <path d="M-3 -54C15 -62 21 -46 20 -34S14 -14 -1 -13z" fill={face} stroke="#1a1a1a" />
        <path d="M-20 -34l8-10 8 2-4 10zM-9 -30l6-8v22l-4 2z" fill="#303030" stroke="#080808" />
        <path d="M-2 -54h4v39h-4zM3 -56h5v40H3z" fill="#a3a300" />
        <path d="M-8 -24c3-5 6-8 8-14" fill="none" stroke="#050505" strokeWidth="2.5" />
    </g>
);

const backRank = [Rook, null, Bishop, Queen, King, Bishop, null, Rook];

const Pieces = () => {
    const pieces = [];
    for (let r = 0; r < 8; r += 1) {
        [1, 0, 6, 7].forEach((c) => {
            const [x, y] = at(c + 0.5, r + 0.5);
            const t = c < 4 ? tones.w : tones.b;
            let shape;
            if (c === 1 || c === 6) shape = <Pawn t={t} />;
            else if (backRank[r]) {
                const Piece = backRank[r];
                shape = <Piece t={t} />;
            } else if (c === 0) shape = <KnightWhite t={t} />;
            else shape = <KnightBlack t={t} face={r === 1 ? '#333' : '#4a4a4a'} />;
            pieces.push(<g key={`${c}-${r}`} transform={`translate(${x} ${y})`}>{shape}</g>);
        });
    }
    return pieces;
};

const squares = Array.from({ length: 64 }, (_, i) => [i % 8, Math.floor(i / 8)]);
const steps = [0, 1, 2, 3, 4, 5, 6, 7];

const Gradient = ({ id, stops }) => (
    <linearGradient id={id}>
        {stops.map((color, i) => (
            <stop key={i} offset={i / (stops.length - 1)} stopColor={color} />
        ))}
    </linearGradient>
);

const outer = { l: [461, 446], b: [765, 834], r: [1559.5, 686], t: [1256, 297] };
const inner = { l: [539.7, 449.3], b: [799.7, 782.7], r: [1481.5, 656], t: [1225, 319] };

const frames = [
    { id: 'left', pts: [outer.l, inner.l, inner.b, outer.b], fill: '#684e36', grain: 'fine', turn: -12 },
    { id: 'top', pts: [outer.l, inner.l, at(0, 0), at(8, 0), inner.t, outer.t], fill: '#6a4e34', grain: 'fine', turn: -10 },
    { id: 'right', pts: [outer.t, inner.t, inner.r, outer.r], fill: '#6b4f35', grain: 'fine', turn: 4 },
    { id: 'front', pts: [outer.b, inner.b, inner.r, outer.r], fill: '#654c35', grain: 'dark', turn: -10.5 },
    { id: 'sideLeft', pts: [outer.l, outer.b, drop(outer.b, 56.5), drop(outer.l, 56.5)], fill: '#846445', grain: 'spot', turn: 50 },
    { id: 'sideFront', pts: [outer.b, outer.r, drop(outer.r, 55.5), drop(outer.b, 56.5)], fill: '#a17b54', grain: 'long', turn: -10.5 },
];

const Board = () => (
    <g>
        {frames.map(({ id, pts, fill, grain, turn }) => (
            <g key={id}>
                <clipPath id={`clip-${id}`}><polygon points={points(pts)} /></clipPath>
                <polygon points={points(pts)} fill={fill} />
                <g clipPath={`url(#clip-${id})`}>
                    <g transform={`rotate(${turn} 1000 600)`}>
                        <rect x="300" y="100" width="1400" height="1000" filter={`url(#${grain})`} />
                    </g>
                </g>
                <polygon points={points(pts)} fill="none" stroke="#0a0a0a" strokeWidth="1.4" />
            </g>
        ))}
        {steps.map((i) => (
            <g key={i} stroke="#0a0a0a">
                <polygon points={points([at(0, i), at(0, i + 1), drop(at(0, i + 1)), drop(at(0, i))])} fill={i % 2 ? '#777' : '#3c3c3c'} />
                <polygon points={points([at(i, 8), at(i + 1, 8), drop(at(i + 1, 8)), drop(at(i, 8))])} fill={i % 2 ? '#444' : '#929292'} />
            </g>
        ))}
        <polygon points={points([at(0, 0), at(8, 0), at(8, 8), at(0, 8)])} fill="#000" stroke="#111" />
        {squares.filter(([c, r]) => (c + r) % 2).map(([c, r]) => (
            <polygon
                key={`${c}${r}`}
                points={points([at(c, r), at(c + 1, r), at(c + 1, r + 1), at(c, r + 1)])}
                fill="#656565"
            />
        ))}
    </g>
);

const Triad = () => (
    <g fontSize="10" fontFamily="Open Sans, sans-serif">
        <path d="M284 948v20" stroke="#14651c" strokeWidth="4" />
        <path d="M279 966h10l-5 8z" fill="#123f14" />
        <path d="M284 948l20-4" stroke="#1b1ba8" strokeWidth="4" />
        <path d="M302 939l11 4-10 5z" fill="#14147a" />
        <path d="M284 948l6 8" stroke="#8d1414" strokeWidth="4" />
        <path d="M287 958l6-5 4 9-8-1z" fill="#cc1616" />
        <text x="310" y="946" fill="#2222ee">Z</text>
        <text x="293" y="968" fill="#ee2222">X</text>
        <text x="281" y="982" fill="#1d7a1d">Y</text>
    </g>
);

const Canvas = () => (
    <Scene viewBox="243 117 1675 888" role="img" aria-label="Chess set model">
        <defs>
            <Gradient id="bodyW" stops={['#444', '#7c7c7c', '#9c9c9c', '#6c6c6c', '#464646']} />
            <Gradient id="baseW" stops={['#444', '#5e5e5e', '#707070', '#565656', '#3c3c3c']} />
            <Gradient id="bodyB" stops={['#0c0c0c', '#262626', '#484848', '#222', '#0c0c0c']} />
            <Gradient id="baseB" stops={['#101010', '#1d1d1d', '#2a2a2a', '#1a1a1a', '#0c0c0c']} />
            <radialGradient id="headW" cx=".5" cy=".35"><stop offset="0" stopColor="#a5a5a5" /><stop offset="1" stopColor="#454545" /></radialGradient>
            <radialGradient id="headB" cx=".5" cy=".4"><stop offset="0" stopColor="#484848" /><stop offset="1" stopColor="#111" /></radialGradient>
            <filter id="fine" x="0" y="0" width="1" height="1">
                <feTurbulence type="fractalNoise" baseFrequency="0.03 0.4" numOctaves="2" />
                <feColorMatrix values="0 0 0 0 .22  0 0 0 0 .13  0 0 0 0 .04  .9 0 0 0 -.28" />
            </filter>
            <filter id="dark" x="0" y="0" width="1" height="1">
                <feTurbulence type="fractalNoise" baseFrequency="0.003 0.12" numOctaves="3" />
                <feColorMatrix values="0 0 0 0 .3  0 0 0 0 .17  0 0 0 0 .06  .9 0 0 0 -.3" />
            </filter>
            <filter id="long" x="0" y="0" width="1" height="1">
                <feTurbulence type="fractalNoise" baseFrequency="0.003 0.14" numOctaves="3" />
                <feColorMatrix values="0 0 0 0 .5  0 0 0 0 .27  0 0 0 0 .08  1.8 0 0 0 -.6" />
            </filter>
            <filter id="spot" x="0" y="0" width="1" height="1">
                <feTurbulence type="fractalNoise" baseFrequency="0.15 0.35" numOctaves="2" />
                <feColorMatrix values="0 0 0 0 .4  0 0 0 0 .22  0 0 0 0 .08  1.4 0 0 0 -.6" />
            </filter>
        </defs>
        <Board />
        <Pieces />
        <Triad />
    </Scene>
);

const quickItems = [
    ['page', 'New'],
    ['open', 'Open'],
    ['save', 'Save'],
    ['print', 'Print'],
    ['undo', 'Undo'],
];

const TopBar = () => (
    <TitleBar>
        <Brand>
            <DSLogo />
            <BrandName><strong>SOLID</strong>WORKS</BrandName>
            <LogoArrow />
        </Brand>
        <QuickBar>
            <IconButton $gap={6} aria-label="Home"><Icon name="home" size={18} /></IconButton>
            {quickItems.map(([icon, label]) => (
                <QuickItem key={icon}>
                    <IconButton aria-label={label}><Icon name={icon} size={18} /></IconButton>
                    <Caret label={`${label} options`} />
                </QuickItem>
            ))}
            <IconButton aria-label="Redo" disabled><Icon name="redo" size={18} /></IconButton>
            <Caret w={17} color="#999" label="Redo options" />
            <SplitBox>
                <IconButton $w={30} $h={28} aria-label="Select"><Icon name="cursor" size={18} /></IconButton>
                <Caret w={12} h={28} label="Select options" />
            </SplitBox>
            <IconButton $w={30} aria-label="Rebuild"><Icon name="light" size={18} /></IconButton>
            <IconButton $w={30} aria-label="File Properties"><Icon name="options" size={18} /></IconButton>
            <IconButton $w={30} aria-label="Options"><Icon name="gear" size={18} /></IconButton>
            <Caret w={12} label="Options list" />
        </QuickBar>
        <DocTitle>Chess Set (White and Black) *</DocTitle>
        <SearchBox>
            <Icon name="prompt" size={14} />
            <input type="text" placeholder="Search Commands" aria-label="Search Commands" />
            <Icon name="search" size={15} />
            <Caret w={8} h={20} color="#888" label="Search options" />
        </SearchBox>
        {['user', 'help', 'minimize', 'restore', 'close'].map((name) => (
            <IconButton key={name} $w={36} aria-label={name}>
                <Icon name={name} size={name === 'user' || name === 'help' ? 19 : 16} />
            </IconButton>
        ))}
    </TitleBar>
);

const CommandRibbon = () => (
    <Ribbon>
        {ribbonGroups.map((group, i) => (
            <RibbonGroup key={i}>
                {group.map(({ icon, label, w, off }) => (
                    <RibbonButton key={label} $w={w} disabled={off}>
                        <Icon name={icon} size={18} />
                        {label}
                    </RibbonButton>
                ))}
            </RibbonGroup>
        ))}
        <ExportGrid>
            {exportItems.map(([icon, label]) => (
                <ExportButton key={label} disabled><Icon name={icon} size={18} />{label}</ExportButton>
            ))}
        </ExportGrid>
        <ExportGrid $last>
            <ExportButton disabled><Icon name="ni" size={18} />Net-Inspect</ExportButton>
        </ExportGrid>
        <CollapseRibbon aria-label="Collapse ribbon"><Icon name="up" size={12} /></CollapseRibbon>
    </Ribbon>
);

const FeaturePanel = () => (
    <SidePanel>
        <Grip><GripDot /></Grip>
        <PanelTabs>
            {['assembly', 'list', 'config', 'target', 'ballMark', 'camera'].map((name, i) => (
                <PanelTab key={name} $active={i === 0} aria-label={name}><Icon name={name} size={18} /></PanelTab>
            ))}
            <TabScroller>
                <IconButton $w={19} $h={18} aria-label="Previous tabs"><Triangle d="M5 1v6L2 4z" color="#000" /></IconButton>
                <IconButton $w={15} $h={18} aria-label="Next tabs"><Triangle d="M3 1v6l3-3z" color="#000" /></IconButton>
            </TabScroller>
        </PanelTabs>
        <FilterBox>
            <Icon name="filter" size={18} />
            <Caret w={8} h={8} label="Filter options" />
            <input type="text" aria-label="Filter" />
        </FilterBox>
        <TreeArea>
            <Tree>
                {treeItems.map(([depth, icon, label, arrow], i) => (
                    <TreeRow key={i} $depth={depth}>
                        {depth >= 0 && (
                            <Twisty>
                                {arrow === 'c' && <Triangle d="M1 0v8l4-4z" />}
                                {arrow === 'o' && <Triangle d="M0 2h8L4 6z" />}
                            </Twisty>
                        )}
                        <Icon name={icon} size={18} />
                        {label}
                    </TreeRow>
                ))}
            </Tree>
            <VScroll>
                <IconButton $w={13} $h={16} aria-label="Scroll up"><Icon name="up" size={11} /></IconButton>
                <VThumb />
                <IconButton $w={13} $h={16} aria-label="Scroll down"><Icon name="down" size={11} /></IconButton>
            </VScroll>
        </TreeArea>
        <HScroll>
            <IconButton $w={16} $h={15} aria-label="Scroll left"><Icon name="left" size={11} /></IconButton>
            <HThumb />
            <IconButton $w={16} $h={15} aria-label="Scroll right"><Icon name="right" size={11} /></IconButton>
        </HScroll>
    </SidePanel>
);

const HeadsUpBar = () => (
    <HeadsUp>
        {['zoomFit', 'zoomArea', 'prevView', 'section', 'annotView', 'orient'].map((name) => (
            <IconButton key={name} $w={26} aria-label={name}><Icon name={name} size={18} /></IconButton>
        ))}
        <Caret w={13} color="#888" />
        <IconButton $w={26} aria-label="Display style"><Icon name="display" size={18} /></IconButton>
        <Caret w={12} color="#888" />
        <SplitBox $gap={2} $fill="#c2c2c2">
            <IconButton $w={27} aria-label="Hide or show items"><Icon name="eye" size={18} /></IconButton>
            <Caret w={11} />
        </SplitBox>
        <IconButton $w={26} aria-label="Edit appearance"><Icon name="editBall" size={18} /></IconButton>
        <IconButton $w={26} aria-label="Apply scene"><Icon name="sceneBall" size={18} /></IconButton>
        <Caret w={14} color="#888" />
        <IconButton $w={26} aria-label="View settings"><Icon name="monitor" size={18} /></IconButton>
        <Caret w={12} color="#888" />
    </HeadsUp>
);

const App = () => (
    <Window>
        <GlobalStyle />
        <TopBar />
        <CommandRibbon />
        <Body>
            <TabBar>
                {commandTabs.map(([label, w], i) => (
                    <CommandTab key={label} $w={w} $active={i === commandTabs.length - 1}>{label}</CommandTab>
                ))}
            </TabBar>
            <FeaturePanel />
            <Viewport>
                <Canvas />
                <HeadsUpBar />
                <DocControls>
                    {['dockLeft', 'dockRight', 'minimize', 'restore', 'close'].map((name) => (
                        <DocButton key={name} $w={26} aria-label={`Document ${name}`}><Icon name={name} size={15} /></DocButton>
                    ))}
                </DocControls>
                <TaskPane>
                    {['compass', 'home', 'library', 'folderOpen', 'palette', 'ball', 'list'].map((name, i) => (
                        <TaskTab key={name} $w={23} $active={i === 0} aria-label={name}><Icon name={name} size={18} /></TaskTab>
                    ))}
                </TaskPane>
                <PanelHandle aria-label="Collapse panel"><GripDot /></PanelHandle>
            </Viewport>
        </Body>
        <BottomBar>
            <NavButtons>
                <button aria-label="First"><Triangle d="M7 0v8L3 4zM1 0h1v8H1z" color="#8a8a8a" /></button>
                <button aria-label="Previous"><Triangle d="M6 0v8L2 4z" color="#8a8a8a" /></button>
                <button aria-label="Next"><Triangle d="M2 0v8l4-4z" color="#8a8a8a" /></button>
                <button aria-label="Last"><Triangle d="M1 0v8l4-4zM6 0h1v8H6z" color="#8a8a8a" /></button>
            </NavButtons>
            <SheetTab $w={57} $active>Model</SheetTab>
            <SheetTab $w={68}>3D Views</SheetTab>
            <SheetTab $w={108}>Motion Study 1</SheetTab>
        </BottomBar>
        <StatusBar>
            <StatusText $grow>SOLIDWORKS Premium 2023 SP0.1</StatusText>
            <StatusText $w={94}>Under Defined</StatusText>
            <StatusText $w={112}>Editing Assembly</StatusText>
            <IconButton $w={16} $h={18} $gap={8} aria-label="Rebuild status"><Icon name="light" size={14} /></IconButton>
            <IconButton $w={16} $h={18} $gap={73} aria-label="Rebuild needed"><Icon name="rebuild" size={15} /></IconButton>
            <StatusText $w={50}>MMGS</StatusText>
            <IconButton $w={14} $h={18} $gap={22} aria-label="Unit system"><Triangle d="M1 6h6L4 3z" color="#333" /></IconButton>
            <IconButton $w={18} $h={18} aria-label="Tags"><Icon name="tag" size={16} /></IconButton>
        </StatusBar>
    </Window>
);

export default App;
